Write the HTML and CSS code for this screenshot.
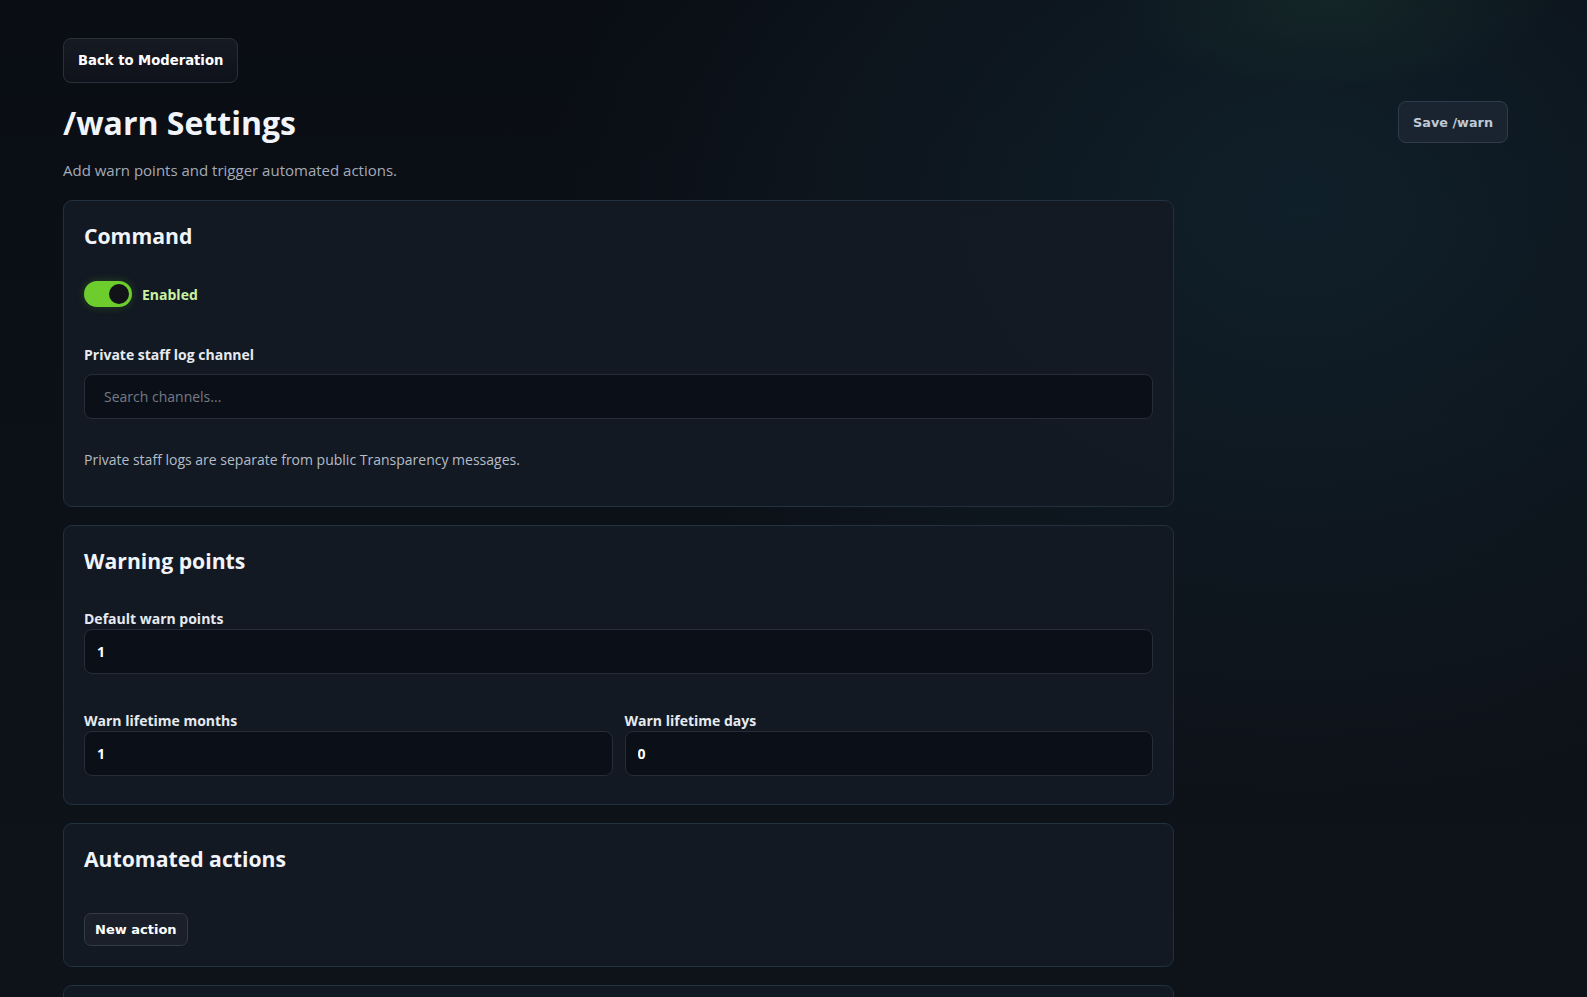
FILE: index.html
```html
<!doctype html>
<html lang="en">
<head>
  <meta charset="UTF-8">
  <meta name="viewport" content="width=device-width, initial-scale=1">
  <title>/warn Settings</title>
  <link rel="stylesheet" href="styles.css">
</head>
<body>
  <div class="page">
    <div class="toprow">
      <button class="btn btn-back">Back to Moderation</button>
    </div>

    <header class="head">
      <div class="head-text">
        <h1 class="title">/warn Settings</h1>
        <p class="subtitle">Add warn points and trigger automated actions.</p>
      </div>
      <button class="btn btn-save">Save /warn</button>
    </header>

    <main class="cards">
      <section class="card">
        <h2 class="card-title">Command</h2>
        <label class="toggle-row">
          <span class="toggle"><span class="knob"></span></span>
          <span class="toggle-text">Enabled</span>
        </label>
        <div class="field field-channel">
          <label class="label">Private staff log channel</label>
          <input class="input" type="text" placeholder="Search channels...">
        </div>
        <p class="help">Private staff logs are separate from public Transparency messages.</p>
      </section>

      <section class="card card-points">
        <h2 class="card-title">Warning points</h2>
        <div class="field field-default">
          <label class="label">Default warn points</label>
          <input class="input input-value" type="text" value="1">
        </div>
        <div class="field-grid">
          <div class="field">
            <label class="label">Warn lifetime months</label>
            <input class="input input-value" type="text" value="1">
          </div>
          <div class="field">
            <label class="label">Warn lifetime days</label>
            <input class="input input-value" type="text" value="0">
          </div>
        </div>
      </section>

      <section class="card card-actions">
        <h2 class="card-title">Automated actions</h2>
        <button class="btn btn-small">New action</button>
      </section>

      <section class="card card-tail">
        <h2 class="card-title">Action history</h2>
        <p class="help">No automated actions have been triggered yet.</p>
      </section>
    </main>
  </div>
</body>
</html>
```

FILE: styles.css
```css
html{
  color-scheme: dark;
}
*{
  box-sizing: border-box;
}
body{
  margin: 0;
  min-height: 100vh;
  font-family: "Open Sans", "Noto Sans", sans-serif;
  color: #e8ecf2;
  background-color: #0b0e15;
  background-image:
    radial-gradient(ellipse 300px 120px at 1330px 0px, rgba(40, 80, 55, 0.22), transparent 75%),
    radial-gradient(ellipse 1000px 800px at 1300px 200px, rgba(20, 46, 58, 0.55), transparent 75%),
    linear-gradient(180deg, #0a0d14 0%, #0e131a 100%);
  background-attachment: fixed;
}
.page{
  padding: 38px 79px 560px 63px;
}
.btn{
  font-family: "DejaVu Sans", Verdana, sans-serif;
  font-weight: bold;
  cursor: pointer;
}
.btn-back{
  height: 45px;
  padding: 0 14px;
  font-size: 13.2px;
  color: #ffffff;
  background: linear-gradient(180deg, #161a23, #0f121a);
  border: 1px solid #2a2f3a;
  border-radius: 8px;
}
.head{
  display: flex;
  justify-content: space-between;
  align-items: flex-start;
}
.title{
  margin: 18px 0 0;
  font-size: 32px;
  line-height: 44px;
  font-weight: 700;
  color: #f1f4f9;
}
.subtitle{
  margin: 15px 0 0;
  font-size: 15px;
  color: #a3abb8;
}
.btn-save{
  margin-top: 18px;
  height: 42px;
  padding: 0 14px;
  font-size: 12.8px;
  color: #bfc9d6;
  background: #1a2430;
  border: 1px solid #2e3b49;
  border-radius: 8px;
}
.cards{
  max-width: 1111px;
  margin-top: 20px;
  display: flex;
  flex-direction: column;
  gap: 18px;
}
.card{
  padding: 20px 20px 27px;
  background: rgba(19, 26, 36, 0.92);
  border: 1px solid #203140;
  border-radius: 9px;
}
.card-title{
  margin: 0;
  font-size: 21.2px;
  line-height: 30px;
  font-weight: 700;
  color: #f1f4f9;
}
.toggle-row{
  display: flex;
  align-items: center;
  gap: 10px;
  margin-top: 30px;
}
.toggle{
  width: 48px;
  height: 26px;
  border-radius: 13px;
  background: #6ccd2c;
  display: flex;
  justify-content: flex-end;
  align-items: center;
  padding: 0 3px;
  box-shadow: 0 0 8px rgba(108, 205, 44, 0.25);
}
.knob{
  width: 20px;
  height: 20px;
  border-radius: 50%;
  background: #111318;
}
.toggle-text{
  font-size: 14px;
  font-weight: 700;
  color: #c9f2a2;
}
.field{
  display: flex;
  flex-direction: column;
  gap: 1px;
  margin-top: 20px;
}
.field-channel{
  margin-top: 38px;
  gap: 10px;
}
.field-default{
  margin-top: 33px;
}
.label{
  font-size: 14px;
  font-weight: 700;
  color: #e6eaf0;
  line-height: 19px;
}
.input{
  width: 100%;
  height: 45px;
  padding: 0 19px;
  font-family: "Open Sans", "Noto Sans", sans-serif;
  font-size: 14px;
  color: #ffffff;
  background: #0b0f17;
  border: 1px solid #262d38;
  border-radius: 8px;
  outline: none;
}
.input::placeholder{
  color: #737b88;
}
.input-value{
  padding: 0 12px;
  font-weight: 700;
}
.help{
  margin: 31px 0 10px;
  font-size: 14px;
  color: #b4bcc8;
}
.field-grid{
  display: grid;
  grid-template-columns: 1fr 1fr;
  gap: 12px;
  margin-top: 37px;
}
.field-grid .field{
  margin-top: 0;
}
.card-points{
  padding-bottom: 28px;
}
.card-actions{
  padding-bottom: 20px;
}
.btn-small{
  margin-top: 39px;
  height: 33px;
  padding: 0 10px;
  font-size: 13px;
  color: #ffffff;
  background: #1a1f29;
  border: 1px solid #323947;
  border-radius: 7px;
}
.card-tail{
  min-height: 160px;
  padding-top: 40px;
}
```
